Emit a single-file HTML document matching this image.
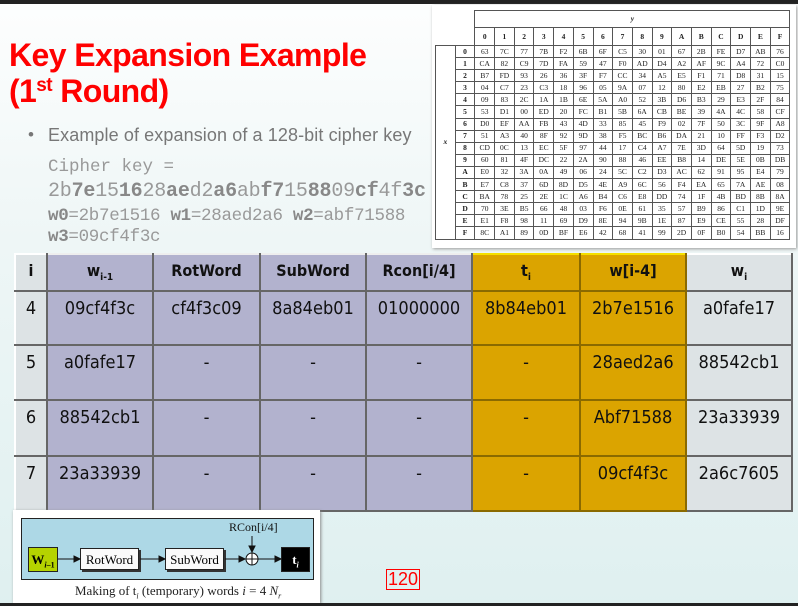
<!DOCTYPE html>
<html><head><meta charset="utf-8"><style>
*{margin:0;padding:0;box-sizing:border-box}
body{width:798px;height:606px;overflow:hidden;position:relative;background:linear-gradient(#fdfefe 0%,#eef6f6 40%,#dff0f0 100%);font-family:"Liberation Sans",sans-serif}
.a{position:absolute}
#top{left:0;top:0;width:798px;height:4px;background:#222}
#bot{left:0;top:603px;width:798px;height:3px;background:#222}
h1{position:absolute;left:9px;top:37px;color:#f00;font-size:32px;line-height:36px;font-weight:bold;letter-spacing:-0.6px}
h1 sup{font-size:19px;vertical-align:11px;line-height:0}
.mono{font-family:"Liberation Mono",monospace;color:#999}
.mono b{color:#888}
#sbox{left:432px;top:5px;width:364px;height:243px;background:#fff;box-shadow:1px 1px 3px #999}
#sb{position:absolute;left:3px;top:5px;border-collapse:collapse;font-family:"Liberation Serif",serif;font-size:7.5px;color:#222}
#sb td{border:1px solid #555;width:19.7px;height:12.1px;text-align:center;padding:0;line-height:10px}
#sb td.h{font-weight:bold}
#main{left:14px;top:253px;border-collapse:collapse;font-family:"DejaVu Sans Condensed","Liberation Sans",sans-serif;font-size:18px;color:#111}
#main td{border:2px solid #666;text-align:center;vertical-align:top;padding-top:6px}
#main tr.hd td{font-weight:bold;font-size:16px;padding-top:6px}
#main td.l{background:#b2b2ce;border-color:#eee #666 #666 #eee}
#main td.g{background:#dba400;border-color:#f5e000 #8a6a00 #8a6a00 #f5e000}
#main td.w{background:#dde3e5;border-color:#fff #666 #666 #fff}
sub{font-size:10px}
#fig{left:13px;top:510px;width:307px;height:93px;background:#fff;box-shadow:1px 1px 3px #888}
#blue{left:8px;top:8px;width:293px;height:62px;background:#add8e6;border:1.5px solid #222}
.box{position:absolute;border:1px solid #222;font-family:"Liberation Serif",serif;font-size:13px;text-align:center;line-height:21px;box-shadow:2px 2px 0 #333}
</style></head><body>
<div id="top" class="a"></div>
<h1>Key Expansion Example<br>(1<sup>st</sup> Round)</h1>
<div class="a" style="left:28px;top:125px;font-size:17px;color:#777">•</div>
<div class="a" style="left:48px;top:125px;font-size:18px;color:#777;letter-spacing:0.1px">Example of expansion of a 128-bit cipher key</div>
<div class="a mono" style="left:48px;top:157px;font-size:17.5px">Cipher key =</div>
<div class="a mono" style="left:48px;top:180px;font-size:20px;letter-spacing:-0.2px">2b<b>7e</b>15<b>16</b>28<b>ae</b>d2<b>a6</b>ab<b>f7</b>15<b>88</b>09<b>cf</b>4f<b>3c</b></div>
<div class="a mono" style="left:48px;top:206px;font-size:17.5px;line-height:21px;letter-spacing:-0.3px"><b>w0</b>=2b7e1516 <b>w1</b>=28aed2a6 <b>w2</b>=abf71588<br><b>w3</b>=09cf4f3c</div>

<div id="sbox" class="a">
<table id="sb">
<tr><td style="border:none;width:17px"></td><td style="border:none"></td><td colspan="16" class="h" style="border-bottom:1px solid #555;height:17px"><i>y</i></td></tr>
<tr><td style="border:none"></td><td style="border:none"></td><td class="h" style="height:18px">0</td><td class="h">1</td><td class="h">2</td><td class="h">3</td><td class="h">4</td><td class="h">5</td><td class="h">6</td><td class="h">7</td><td class="h">8</td><td class="h">9</td><td class="h">A</td><td class="h">B</td><td class="h">C</td><td class="h">D</td><td class="h">E</td><td class="h">F</td></tr>
<tr><td rowspan="16" class="h"><i>x</i></td><td class="h">0</td><td>63</td><td>7C</td><td>77</td><td>7B</td><td>F2</td><td>6B</td><td>6F</td><td>C5</td><td>30</td><td>01</td><td>67</td><td>2B</td><td>FE</td><td>D7</td><td>AB</td><td>76</td></tr>
<tr><td class="h">1</td><td>CA</td><td>82</td><td>C9</td><td>7D</td><td>FA</td><td>59</td><td>47</td><td>F0</td><td>AD</td><td>D4</td><td>A2</td><td>AF</td><td>9C</td><td>A4</td><td>72</td><td>C0</td></tr>
<tr><td class="h">2</td><td>B7</td><td>FD</td><td>93</td><td>26</td><td>36</td><td>3F</td><td>F7</td><td>CC</td><td>34</td><td>A5</td><td>E5</td><td>F1</td><td>71</td><td>D8</td><td>31</td><td>15</td></tr>
<tr><td class="h">3</td><td>04</td><td>C7</td><td>23</td><td>C3</td><td>18</td><td>96</td><td>05</td><td>9A</td><td>07</td><td>12</td><td>80</td><td>E2</td><td>EB</td><td>27</td><td>B2</td><td>75</td></tr>
<tr><td class="h">4</td><td>09</td><td>83</td><td>2C</td><td>1A</td><td>1B</td><td>6E</td><td>5A</td><td>A0</td><td>52</td><td>3B</td><td>D6</td><td>B3</td><td>29</td><td>E3</td><td>2F</td><td>84</td></tr>
<tr><td class="h">5</td><td>53</td><td>D1</td><td>00</td><td>ED</td><td>20</td><td>FC</td><td>B1</td><td>5B</td><td>6A</td><td>CB</td><td>BE</td><td>39</td><td>4A</td><td>4C</td><td>58</td><td>CF</td></tr>
<tr><td class="h">6</td><td>D0</td><td>EF</td><td>AA</td><td>FB</td><td>43</td><td>4D</td><td>33</td><td>85</td><td>45</td><td>F9</td><td>02</td><td>7F</td><td>50</td><td>3C</td><td>9F</td><td>A8</td></tr>
<tr><td class="h">7</td><td>51</td><td>A3</td><td>40</td><td>8F</td><td>92</td><td>9D</td><td>38</td><td>F5</td><td>BC</td><td>B6</td><td>DA</td><td>21</td><td>10</td><td>FF</td><td>F3</td><td>D2</td></tr>
<tr><td class="h">8</td><td>CD</td><td>0C</td><td>13</td><td>EC</td><td>5F</td><td>97</td><td>44</td><td>17</td><td>C4</td><td>A7</td><td>7E</td><td>3D</td><td>64</td><td>5D</td><td>19</td><td>73</td></tr>
<tr><td class="h">9</td><td>60</td><td>81</td><td>4F</td><td>DC</td><td>22</td><td>2A</td><td>90</td><td>88</td><td>46</td><td>EE</td><td>B8</td><td>14</td><td>DE</td><td>5E</td><td>0B</td><td>DB</td></tr>
<tr><td class="h">A</td><td>E0</td><td>32</td><td>3A</td><td>0A</td><td>49</td><td>06</td><td>24</td><td>5C</td><td>C2</td><td>D3</td><td>AC</td><td>62</td><td>91</td><td>95</td><td>E4</td><td>79</td></tr>
<tr><td class="h">B</td><td>E7</td><td>C8</td><td>37</td><td>6D</td><td>8D</td><td>D5</td><td>4E</td><td>A9</td><td>6C</td><td>56</td><td>F4</td><td>EA</td><td>65</td><td>7A</td><td>AE</td><td>08</td></tr>
<tr><td class="h">C</td><td>BA</td><td>78</td><td>25</td><td>2E</td><td>1C</td><td>A6</td><td>B4</td><td>C6</td><td>E8</td><td>DD</td><td>74</td><td>1F</td><td>4B</td><td>BD</td><td>8B</td><td>8A</td></tr>
<tr><td class="h">D</td><td>70</td><td>3E</td><td>B5</td><td>66</td><td>48</td><td>03</td><td>F6</td><td>0E</td><td>61</td><td>35</td><td>57</td><td>B9</td><td>86</td><td>C1</td><td>1D</td><td>9E</td></tr>
<tr><td class="h">E</td><td>E1</td><td>F8</td><td>98</td><td>11</td><td>69</td><td>D9</td><td>8E</td><td>94</td><td>9B</td><td>1E</td><td>87</td><td>E9</td><td>CE</td><td>55</td><td>28</td><td>DF</td></tr>
<tr><td class="h">F</td><td>8C</td><td>A1</td><td>89</td><td>0D</td><td>BF</td><td>E6</td><td>42</td><td>68</td><td>41</td><td>99</td><td>2D</td><td>0F</td><td>B0</td><td>54</td><td>BB</td><td>16</td></tr>
</table>
</div>

<table id="main" class="a">
<tr class="hd" style="height:37px"><td class="w" style="width:32px">i</td><td class="l" style="width:106px">w<sub>i-1</sub></td><td class="l" style="width:107px">RotWord</td><td class="l" style="width:106px">SubWord</td><td class="l" style="width:106px">Rcon[i/4]</td><td class="g" style="width:108px">t<sub>i</sub></td><td class="g" style="width:106px">w[i-4]</td><td class="w" style="width:106px">w<sub>i</sub></td></tr>
<tr style="height:54px"><td class="w">4</td><td class="l">09cf4f3c</td><td class="l">cf4f3c09</td><td class="l">8a84eb01</td><td class="l">01000000</td><td class="g">8b84eb01</td><td class="g">2b7e1516</td><td class="w">a0fafe17</td></tr>
<tr style="height:55px"><td class="w">5</td><td class="l">a0fafe17</td><td class="l">-</td><td class="l">-</td><td class="l">-</td><td class="g">-</td><td class="g">28aed2a6</td><td class="w">88542cb1</td></tr>
<tr style="height:56px"><td class="w">6</td><td class="l">88542cb1</td><td class="l">-</td><td class="l">-</td><td class="l">-</td><td class="g">-</td><td class="g">Abf71588</td><td class="w">23a33939</td></tr>
<tr style="height:55px"><td class="w">7</td><td class="l">23a33939</td><td class="l">-</td><td class="l">-</td><td class="l">-</td><td class="g">-</td><td class="g">09cf4f3c</td><td class="w">2a6c7605</td></tr>
</table>

<div id="fig" class="a">
 <div id="blue" class="a"></div>
 <div class="box" style="left:15px;top:37px;width:30px;height:25px;background:#b5d300;font-weight:bold;box-shadow:none;line-height:23px">W<sub style="font-size:8px"><i>i</i>–1</sub></div>
 <div class="box" style="left:67px;top:38px;width:59px;height:22px;background:#fafafa">RotWord</div>
 <div class="box" style="left:152px;top:38px;width:59px;height:22px;background:#fafafa">SubWord</div>
 <div class="box" style="left:268px;top:37px;width:29px;height:25px;background:#000;color:#fff;box-shadow:none;font-weight:bold;line-height:23px">t<sub style="font-size:8px"><i>i</i></sub></div>
 <div class="a" style="left:216px;top:10px;font-family:'Liberation Serif',serif;font-size:12px;color:#111">RCon[i/4]</div>
 <svg class="a" style="left:0;top:0" width="307" height="93">
  <g stroke="#111" stroke-width="1" fill="#111">
   <line x1="45" y1="49" x2="62" y2="49"/><polygon points="67,49 61,46 61,52"/>
   <line x1="127" y1="49" x2="147" y2="49"/><polygon points="152,49 146,46 146,52"/>
   <line x1="212" y1="49" x2="227" y2="49"/><polygon points="232,49 226,46 226,52"/>
   <line x1="245" y1="49" x2="263" y2="49"/><polygon points="268,49 262,46 262,52"/>
   <line x1="239" y1="26" x2="239" y2="37"/><polygon points="239,42 236,36 242,36"/>
   <circle cx="239" cy="49" r="6" fill="#fff"/>
   <line x1="233" y1="49" x2="245" y2="49"/><line x1="239" y1="43" x2="239" y2="55"/>
  </g>
 </svg>
 <div class="a" style="left:62px;top:73px;font-family:'Liberation Serif',serif;font-size:13px;color:#222;white-space:nowrap">Making of t<sub style="font-size:8px"><i>i</i></sub> (temporary) words <i>i</i> = 4 <i>N<sub style="font-size:8px">r</sub></i></div>
</div>

<div class="a" style="left:386px;top:569px;border:1px solid #f00;color:#f00;font-size:18px;line-height:19px;padding:0 1px">120</div>
<div id="bot" class="a"></div>
</body></html>
